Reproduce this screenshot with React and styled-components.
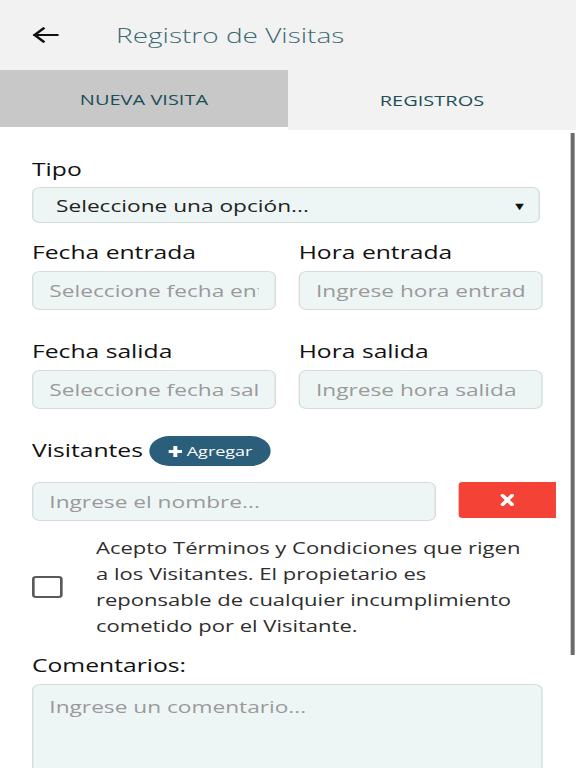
import styled, { createGlobalStyle } from 'styled-components'

// the reference is a phone screen stretched to 3:4, so the page is laid out
// at 432px and widened by 4/3 as a whole
const GlobalStyle = createGlobalStyle`
    html, body {
        margin: 0;
        padding: 0;
        background: #fff;
    }
    body {
        font-family: 'Open Sans', 'Liberation Sans', sans-serif;
        overflow: hidden;
    }
    * {
        box-sizing: border-box;
    }
`

const Screen = styled.div`
    width: 432px;
    height: 768px;
    display: flex;
    flex-direction: column;
    overflow: hidden;
    background: #fff;
    transform: scaleX(1.3333);
    transform-origin: 0 0;
`
const Header = styled.div`
    height: 70px;
    flex-shrink: 0;
    display: flex;
    align-items: center;
    background: #f2f2f2;
    padding-left: 24px;
`
const BackButton = styled.div`
    width: 20px;
    height: 20px;
    display: flex;
    align-items: center;
    justify-content: center;
    margin-right: 43px;
`
const Title = styled.h1`
    margin: 0;
    font-size: 21px;
    font-weight: 300;
    color: #3b6a72;
`
const Tabs = styled.div`
    display: flex;
    flex-shrink: 0;
    align-items: flex-start;
    background: #fff;
`
const Tab = styled.div`
    flex: 1;
    height: ${(p) => (p.active ? '57px' : '60px')};
    display: flex;
    align-items: center;
    justify-content: center;
    background: ${(p) => (p.active ? '#c8c8c8' : '#f2f2f2')};
    color: #1d4e58;
    font-size: 15px;
    text-transform: uppercase;
`
const Body = styled.div`
    flex: 1;
    display: flex;
    min-height: 0;
`
const Content = styled.div`
    flex: 1;
    padding: 26px 0 0 24px;
    display: flex;
    flex-direction: column;
`
const ScrollBar = styled.div`
    width: 4px;
    display: flex;
    flex-direction: column;
    padding-right: 1px;
`
const Thumb = styled.div`
    height: 522px;
    margin-top: 3px;
    background: #6b6b6b;
`
const Label = styled.div`
    font-size: 18.5px;
    color: #111;
    line-height: 26px;
    margin-bottom: ${(p) => p.gap || '6px'};
    margin-top: ${(p) => p.mt || '0'};
`
const fieldBox = `
    flex-shrink: 0;
    border: 1.5px solid #d5dbdb;
    border-radius: 6px;
    background: #eef5f5;
    font-family: inherit;
    font-size: 17px;
    color: #222;
    outline: none;
    &::placeholder {
        color: #9a9a9a;
        opacity: 1;
    }
`
const Input = styled.input`
    ${fieldBox}
    width: ${(p) => p.w || '183px'};
    height: 39px;
    padding: 0 12px;
`
const TextArea = styled.textarea`
    ${fieldBox}
    width: 383px;
    height: 120px;
    padding: 10px 12px;
    resize: none;
`
const Select = styled.div`
    ${fieldBox}
    width: 381px;
    height: 36px;
    padding: 0 9px 0 17px;
    display: flex;
    align-items: center;
    justify-content: space-between;
`
const Caret = styled.span`
    font-size: 11px;
    color: #111;
`
const Row = styled.div`
    display: flex;
    gap: 17px;
    margin-top: ${(p) => p.mt || '0'};
`
const Col = styled.div`
    display: flex;
    flex-direction: column;
`
const VisitorsHead = styled.div`
    display: flex;
    align-items: center;
    gap: 5px;
    margin-top: 25px;
`
const AddButton = styled.div`
    width: 91px;
    height: 30px;
    border-radius: 15px;
    background: #2b5e7b;
    color: #fff;
    font-size: 13.5px;
    display: flex;
    align-items: center;
    justify-content: center;
    gap: 3px;
    margin-top: 2px;
`
const VisitorRow = styled.div`
    display: flex;
    gap: 17px;
    margin-top: 16px;
`
const RemoveButton = styled.div`
    width: 73px;
    height: 36px;
    flex-shrink: 0;
    background: #f44336;
    border-radius: 3px 0 0 3px;
    display: flex;
    align-items: center;
    justify-content: center;
`
const Terms = styled.div`
    display: flex;
    align-items: center;
    margin-top: 14px;
`
const CheckBox = styled.div`
    width: 22.5px;
    height: 22.5px;
    border: 2.5px solid #5a5a5a;
    border-radius: 3px;
    margin-right: 25.5px;
    flex-shrink: 0;
`
const TermsText = styled.p`
    margin: 0;
    width: 330px;
    font-size: 16.5px;
    line-height: 26px;
    color: #2e2e2e;
`

function Arrow() {
    return (
        <svg width='20' height='16' viewBox='0 0 20 16'>
            <path
                d='M19 8H2M8.5 1.5L2 8l6.5 6.5'
                fill='none'
                stroke='#111'
                strokeWidth='2.2'
                strokeLinecap='square'
            />
        </svg>
    )
}

function Times() {
    return (
        <svg width='11' height='14' viewBox='0 0 11 14'>
            <path d='M2 2.5l7 9M9 2.5l-7 9' stroke='#fff' strokeWidth='3' strokeLinecap='round' />
        </svg>
    )
}

function Plus() {
    return (
        <svg width='11' height='13' viewBox='0 0 11 13'>
            <path d='M5.5 1v11M0.5 6.5h10' stroke='#fff' strokeWidth='3' />
        </svg>
    )
}

export default function App() {
    return (
        <Screen>
            <GlobalStyle />
            <Header>
                <BackButton>
                    <Arrow />
                </BackButton>
                <Title>Registro de Visitas</Title>
            </Header>
            <Tabs>
                <Tab active>Nueva Visita</Tab>
                <Tab>Registros</Tab>
            </Tabs>
            <Body>
                <Content>
                    <Label gap='5px'>Tipo</Label>
                    <Select>
                        <span>Seleccione una opción...</span>
                        <Caret>▼</Caret>
                    </Select>
                    <Row mt='16px'>
                        <Col>
                            <Label>Fecha entrada</Label>
                            <Input readOnly placeholder='Seleccione fecha entrada' />
                        </Col>
                        <Col>
                            <Label>Hora entrada</Label>
                            <Input readOnly placeholder='Ingrese hora entrada' />
                        </Col>
                    </Row>
                    <Row mt='28px'>
                        <Col>
                            <Label>Fecha salida</Label>
                            <Input readOnly placeholder='Seleccione fecha salida' />
                        </Col>
                        <Col>
                            <Label>Hora salida</Label>
                            <Input readOnly placeholder='Ingrese hora salida' />
                        </Col>
                    </Row>
                    <VisitorsHead>
                        <Label gap='0'>Visitantes</Label>
                        <AddButton>
                            <Plus />
                            Agregar
                        </AddButton>
                    </VisitorsHead>
                    <VisitorRow>
                        <Input w='303px' readOnly placeholder='Ingrese el nombre...' />
                        <RemoveButton>
                            <Times />
                        </RemoveButton>
                    </VisitorRow>
                    <Terms>
                        <CheckBox />
                        <TermsText>
                            Acepto Términos y Condiciones que rigen a los Visitantes. El
                            propietario es reponsable de cualquier incumplimiento
                            cometido por el Visitante.
                        </TermsText>
                    </Terms>
                    <Label mt='13px'>Comentarios:</Label>
                    <TextArea readOnly placeholder='Ingrese un comentario...' />
                </Content>
                <ScrollBar>
                    <Thumb />
                </ScrollBar>
            </Body>
        </Screen>
    )
}
